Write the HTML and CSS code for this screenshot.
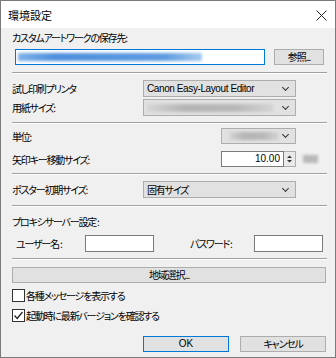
FILE: index.html
```html
<!DOCTYPE html>
<html lang="ja">
<head>
    <meta charset="UTF-8">
    <title>環境設定</title>
    <link rel="stylesheet" href="styles.css">
</head>
<body>
    <div class="window">
        <!-- Title bar -->
        <div class="titlebar">
            <span class="title">環境設定</span>
            <svg class="close" width="11" height="11" viewBox="0 0 11 11">
                <path d="M0.5 0.5 L10.5 10.5 M10.5 0.5 L0.5 10.5" stroke="#222" stroke-width="1" fill="none"/>
            </svg>
        </div>

        <div class="content">
            <div class="label first-label">カスタムアートワークの保存先:</div>
            <div class="row path-row">
                <div class="textbox path-box focused"><div class="blur blur-blue"></div></div>
                <button class="btn browse">参照...</button>
            </div>

            <div class="sep sep-1"></div>

            <div class="row field printer-row">
                <span class="field-label">試し印刷プリンタ</span>
                <div class="select wide"><span class="select-text latin">Canon Easy-Layout Editor</span><span class="chev"></span></div>
            </div>
            <div class="row field paper-row">
                <span class="field-label">用紙サイズ:</span>
                <div class="select wide"><div class="blur blur-gray long"></div><span class="chev"></span></div>
            </div>

            <div class="sep sep-2"></div>

            <div class="row field unit-row">
                <span class="field-label">単位:</span>
                <div class="select narrow"><div class="blur blur-gray short"></div><span class="chev"></span></div>
            </div>
            <div class="row field arrow-row">
                <span class="field-label">矢印キー移動サイズ:</span>
                <div class="spin-group">
                    <div class="textbox number latin">10.00</div>
                    <div class="spinner">
                        <svg width="7" height="10" viewBox="0 0 7 10">
                            <path d="M1 4 L3.5 1.5 L6 4 Z M1 6 L3.5 8.5 L6 6 Z" fill="#333"/>
                        </svg>
                    </div>
                </div>
                <div class="blur unit-blur"></div>
            </div>

            <div class="sep sep-3"></div>

            <div class="row field poster-row">
                <span class="field-label">ポスター初期サイズ:</span>
                <div class="select wide"><span class="select-text">固有サイズ</span><span class="chev"></span></div>
            </div>

            <div class="sep sep-4"></div>

            <div class="label proxy-label">プロキシサーバー設定&nbsp;:</div>
            <div class="row proxy-row">
                <span class="user-label">ユーザー名&nbsp;:</span>
                <div class="textbox proxy-box"></div>
                <span class="pass-label">パスワード&nbsp;:</span>
                <div class="textbox proxy-box"></div>
            </div>

            <div class="sep sep-5"></div>

            <button class="btn region">地域選択...</button>

            <label class="check check-1">
                <span class="box"></span>
                <span>各種メッセージを表示する</span>
            </label>
            <label class="check check-2">
                <span class="box">
                    <svg width="11" height="11" viewBox="0 0 11 11">
                        <path d="M1.5 5.5 L4.2 8.5 L9.5 2" stroke="#222" stroke-width="1.3" fill="none"/>
                    </svg>
                </span>
                <span>起動時に最新バージョンを確認する</span>
            </label>

            <div class="row footer">
                <button class="btn ok latin">OK</button>
                <button class="btn cancel">キャンセル</button>
            </div>
        </div>
    </div>
</body>
</html>
```

FILE: styles.css
```css
body {
    margin: 0;
    background: #f0f0f0;
}

.window {
    width: 336px;
    height: 358px;
    box-sizing: border-box;
    border: 1px solid #7a7a7a;
    background: #f0f0f0;
    font-family: "Noto Sans CJK JP", sans-serif;
    font-size: 10px;
    letter-spacing: -1.2px;
    font-feature-settings: "palt";
    color: #000;
    overflow: hidden;
}

.latin {
    font-family: "Liberation Sans", sans-serif;
    font-size: 10px;
    letter-spacing: -0.4px;
}

.titlebar {
    height: 27px;
    background: #fff;
    display: flex;
    align-items: center;
    justify-content: space-between;
    padding: 0 8px 0 7px;
}

.title {
    font-size: 11px;
    letter-spacing: 0;
}

.close {
    margin-top: 1px;
}

.content {
    padding: 0 8px 0 11px;
    display: flex;
    flex-direction: column;
}

.label {
    height: 14px;
    line-height: 14px;
}

.first-label {
    margin-top: 3px;
}

.row {
    display: flex;
    align-items: center;
}

.path-row {
    margin-top: 4px;
    height: 16px;
    padding-left: 3px;
}

.textbox {
    box-sizing: border-box;
    background: #fff;
    border: 1px solid #7a7a7a;
    height: 16px;
    position: relative;
    overflow: hidden;
}

.textbox.focused {
    border-color: #0078d7;
}

.path-box {
    width: 250px;
}

.blur {
    filter: blur(1.5px);
}

.blur-blue {
    position: absolute;
    left: 2px;
    top: 3px;
    width: 184px;
    height: 8px;
    background: linear-gradient(90deg, #7fb2e8, #4d8fdc 20%, #5f9ce0 80%, #a8cbf0);
}

.btn {
    box-sizing: border-box;
    height: 16px;
    border: 1px solid #adadad;
    background: #e1e1e1;
    font-family: inherit;
    font-size: inherit;
    letter-spacing: inherit;
    font-feature-settings: "palt";
    padding: 0;
    color: #000;
    line-height: 14px;
}

.btn.latin {
    font-family: "Liberation Sans", sans-serif;
    font-size: 10px;
    letter-spacing: 0;
}

.browse {
    width: 50px;
    margin-left: 9px;
}

.sep {
    height: 1px;
    border-top: 1px solid #a0a0a0;
    background: #fff;
}

.sep-1 { margin-top: 7px; }
.sep-2 { margin-top: 6px; }
.sep-3 { margin-top: 6px; }
.sep-4 { margin-top: 7px; }
.sep-5 { margin-top: 6px; }

.field {
    height: 17px;
}

.field-label {
    width: 131px;
    flex: none;
}

.printer-row { margin-top: 6px; }
.paper-row { margin-top: 2px; }
.unit-row { margin-top: 4px; height: 16px; }
.arrow-row { margin-top: 7px; height: 16px; }
.poster-row { margin-top: 6px; }

.select {
    box-sizing: border-box;
    height: 100%;
    border: 1px solid #adadad;
    background: #e1e1e1;
    display: flex;
    align-items: center;
    padding-left: 3px;
    position: relative;
}

.select.wide {
    width: 153px;
}

.select.narrow {
    width: 75px;
    margin-left: 78px;
}

.select-text {
    flex: 1;
}

.chev {
    width: 4px;
    height: 4px;
    border-right: 1px solid #333;
    border-bottom: 1px solid #333;
    transform: rotate(45deg);
    margin: 0 7px 3px 0;
    margin-left: auto;
}

.blur-gray {
    height: 8px;
    background: linear-gradient(90deg, #d6d6d6, #b4b4b4 30%, #b8b8b8 70%, #d4d4d4);
}

.blur-gray.long {
    width: 126px;
}

.blur-gray.short {
    width: 50px;
    margin-left: 4px;
}

.spin-group {
    display: flex;
    margin-left: 78px;
    height: 16px;
}

.number {
    width: 63px;
    text-align: right;
    padding-right: 3px;
    line-height: 14px;
    letter-spacing: 0;
}

.spinner {
    box-sizing: border-box;
    width: 12px;
    height: 16px;
    border: 1px solid #adadad;
    border-left: none;
    background: #e9e9e9;
    display: flex;
    align-items: center;
    justify-content: center;
}

.unit-blur {
    width: 15px;
    height: 8px;
    margin-left: 7px;
    background: #b8b8b8;
    filter: blur(1.5px);
}

.proxy-label {
    margin-top: 8px;
}

.proxy-row {
    margin-top: 6px;
    height: 17px;
}

.user-label {
    width: 73px;
    padding-left: 4px;
    box-sizing: border-box;
    flex: none;
}

.proxy-box {
    width: 69px;
    height: 17px;
    flex: none;
}

.pass-label {
    margin-left: 36px;
    width: 64px;
    flex: none;
}

.region {
    margin-top: 7px;
    width: 314px;
}

.check {
    display: flex;
    align-items: center;
    height: 14px;
    gap: 1px;
}

.check-1 { margin-top: 5px; }
.check-2 { margin-top: 6px; }

.box {
    box-sizing: border-box;
    width: 13px;
    height: 13px;
    border: 1px solid #333;
    background: #fff;
    display: flex;
    align-items: center;
    justify-content: center;
}

.footer {
    margin-top: 14px;
    padding-left: 131px;
    gap: 11px;
}

.ok {
    width: 86px;
    border-color: #0078d7;
}

.cancel {
    width: 86px;
}
```
